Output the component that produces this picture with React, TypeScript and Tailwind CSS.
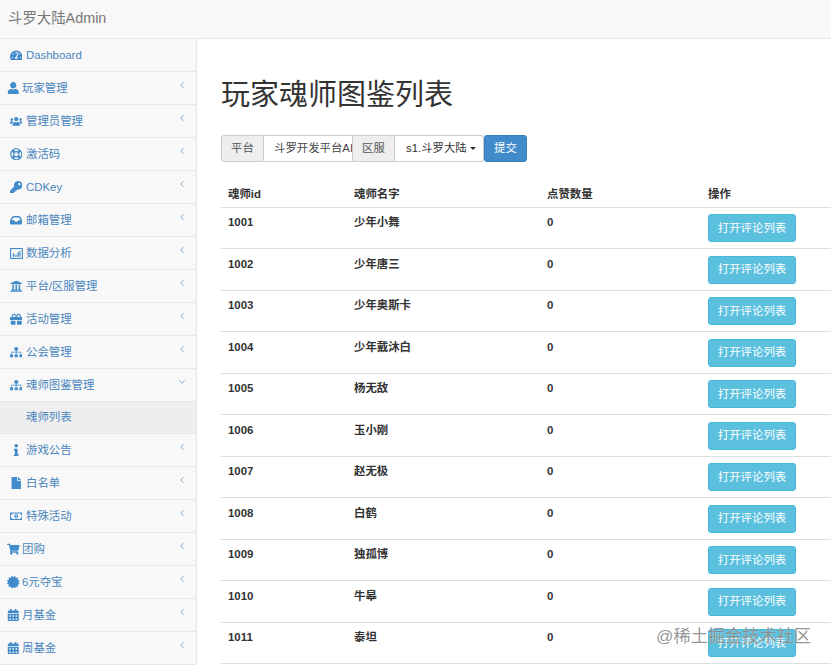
import React from "react";
import {
  FaTachometerAlt, FaUser, FaUsers, FaRegLifeRing, FaKey, FaInbox, FaUniversity, FaGift,
  FaSitemap, FaInfo, FaFile, FaRegMoneyBillAlt, FaShoppingCart, FaCertificate, FaCalendarAlt,
} from "react-icons/fa";
import { FiChevronLeft, FiChevronDown } from "react-icons/fi";

const font = "font-['Liberation_Sans','Noto_Sans_CJK_SC',sans-serif]";

function ChartIcon({ className }: { className?: string }) {
  return (
    <svg viewBox="0 0 14 12" width="13" height="11" fill="none" className={className}>
      <rect x="0.6" y="0.6" width="12.8" height="10.8" stroke="currentColor" strokeWidth="1.2" />
      <path d="M3 6h1.6v3.5H3zM5.6 7.5h1.6v2H5.6zM8 5h1.6v4.5H8zM10.2 3h1.2v6.5h-1.2z" fill="currentColor" />
    </svg>
  );
}

type Item = { label: string; Icon?: React.ComponentType<{ className?: string }>; tight?: boolean; arrow?: "left" | "down" | "none"; sub?: boolean; };

const items: Item[] = [
  { label: "Dashboard", Icon: FaTachometerAlt, arrow: "none" },
  { label: "玩家管理", Icon: FaUser, tight: true },
  { label: "管理员管理", Icon: FaUsers },
  { label: "激活码", Icon: FaRegLifeRing },
  { label: "CDKey", Icon: FaKey },
  { label: "邮箱管理", Icon: FaInbox },
  { label: "数据分析", Icon: ChartIcon },
  { label: "平台/区服管理", Icon: FaUniversity },
  { label: "活动管理", Icon: FaGift },
  { label: "公会管理", Icon: FaSitemap },
  { label: "魂师图鉴管理", Icon: FaSitemap, arrow: "down" },
  { label: "魂师列表", sub: true, arrow: "none" },
  { label: "游戏公告", Icon: FaInfo },
  { label: "白名单", Icon: FaFile },
  { label: "特殊活动", Icon: FaRegMoneyBillAlt },
  { label: "团购", Icon: FaShoppingCart, tight: true },
  { label: "6元夺宝", Icon: FaCertificate, tight: true },
  { label: "月基金", Icon: FaCalendarAlt, tight: true },
  { label: "周基金", Icon: FaCalendarAlt, tight: true },
];

const rows: [string, string][] = [
  ["1001", "少年小舞"], ["1002", "少年唐三"], ["1003", "少年奥斯卡"], ["1004", "少年戴沐白"],
  ["1005", "杨无敌"], ["1006", "玉小刚"], ["1007", "赵无极"], ["1008", "白鹤"],
  ["1009", "独孤博"], ["1010", "牛皋"], ["1011", "泰坦"],
];

function SideRow({ item }: { item: Item }) {
  const { label, Icon, tight, arrow = "left", sub } = item;
  return (
    <div className={`flex shrink-0 items-center border-b border-[#e7e7e7] text-[11.4px] text-[#4a86bd] ${sub ? "h-[32px] bg-[#eeeeee] pl-[26px]" : "h-[33px]"} ${tight ? "pl-[8px]" : sub ? "" : "pl-[10px]"}`}>
      {Icon && (
        <span className={`flex shrink-0 items-center justify-center ${tight ? "w-[14px] pr-[3px]" : "w-[16px] pr-[4px]"}`}>
          <Icon className="shrink-0 text-[12.5px] text-[#428bca]" />
        </span>
      )}
      <span className="flex-1 whitespace-nowrap pt-[1px]">{label}</span>
      {arrow === "left" && <FiChevronLeft className="mr-[9px] mb-[6px] text-[10px] text-[#6b9cc8]" />}
      {arrow === "down" && <FiChevronDown className="mr-[9px] mb-[6px] text-[10px] text-[#6b9cc8]" />}
    </div>
  );
}

export default function App() {
  return (
    <div className={`${font} relative h-[665px] w-[831px] overflow-hidden bg-white text-[11.4px] text-[#333333]`}>
      <header className="flex h-[39px] items-center border-b border-[#e7e7e7] bg-[#f8f8f8] pl-[8px] text-[14.4px] text-[#777777]">
        斗罗大陆Admin
      </header>
      <div className="flex h-[626px]">
        <aside className="flex w-[197px] shrink-0 flex-col overflow-hidden border-r border-[#e7e7e7] bg-[#f8f8f8]">
          {items.map((item) => <SideRow key={item.label} item={item} />)}
        </aside>
        <main className="min-w-0 flex-1 pl-[24px]">
          <h1 className="mt-[38px] text-[29px] leading-[36px] font-normal whitespace-nowrap text-[#333333]">玩家魂师图鉴列表</h1>
          <div className="mt-[22px] flex h-[27px]">
            <span className="flex w-[43px] items-center justify-center rounded-l-[3px] border border-[#cccccc] bg-[#eeeeee] text-[#555555]">平台</span>
            <span className="flex w-[88px] items-center overflow-hidden border-y border-[#cccccc] bg-white pl-[10px] whitespace-nowrap text-[#444444]">斗罗开发平台AI</span>
            <span className="flex w-[43px] items-center justify-center border border-[#cccccc] bg-[#eeeeee] text-[#555555]">区服</span>
            <span className="flex w-[89px] items-center gap-[3px] rounded-r-[3px] border-y border-r border-[#cccccc] bg-white pl-[11px] whitespace-nowrap">
              s1.斗罗大陆
              <span className="border-x-[3px] border-t-[3px] border-x-transparent border-t-[#333333]" />
            </span>
            <span className="flex w-[43px] items-center justify-center rounded-[3px] border border-[#357ebd] bg-[#428bca] text-white">提交</span>
          </div>
          <table className="mt-[20px] w-[610px] table-fixed border-collapse text-left">
            <thead>
              <tr className="h-[25px] border-b border-[#dddddd]">
                <th className="w-[126px] pl-[7px] font-bold">魂师id</th>
                <th className="w-[193px] pl-[7px] font-bold">魂师名字</th>
                <th className="w-[161px] pl-[7px] font-bold">点赞数量</th>
                <th className="pl-[7px] font-bold">操作</th>
              </tr>
            </thead>
            <tbody>
              {rows.map(([id, name]) => (
                <tr key={id} className="h-[41.5px] border-b border-[#dddddd]">
                  <td className="pt-[6.5px] pl-[7px] align-top font-bold">{id}</td>
                  <td className="pt-[6.5px] pl-[7px] align-top font-bold">{name}</td>
                  <td className="pt-[6.5px] pl-[7px] align-top font-bold">0</td>
                  <td className="pt-[1px] pl-[7px] align-middle">
                    <button className="flex h-[28px] w-[88px] items-center justify-center rounded-[3px] border border-[#46b8da] bg-[#5bc0de] text-[11.4px] text-white">打开评论列表</button>
                  </td>
                </tr>
              ))}
            </tbody>
          </table>
        </main>
      </div>
      <div className="absolute top-[625px] left-[656px] text-[17.2px] leading-[22px] whitespace-nowrap text-[#666666]/70 [text-shadow:0_0_1px_rgba(255,255,255,0.8)]">@稀土掘金技术社区</div>
    </div>
  );
}
